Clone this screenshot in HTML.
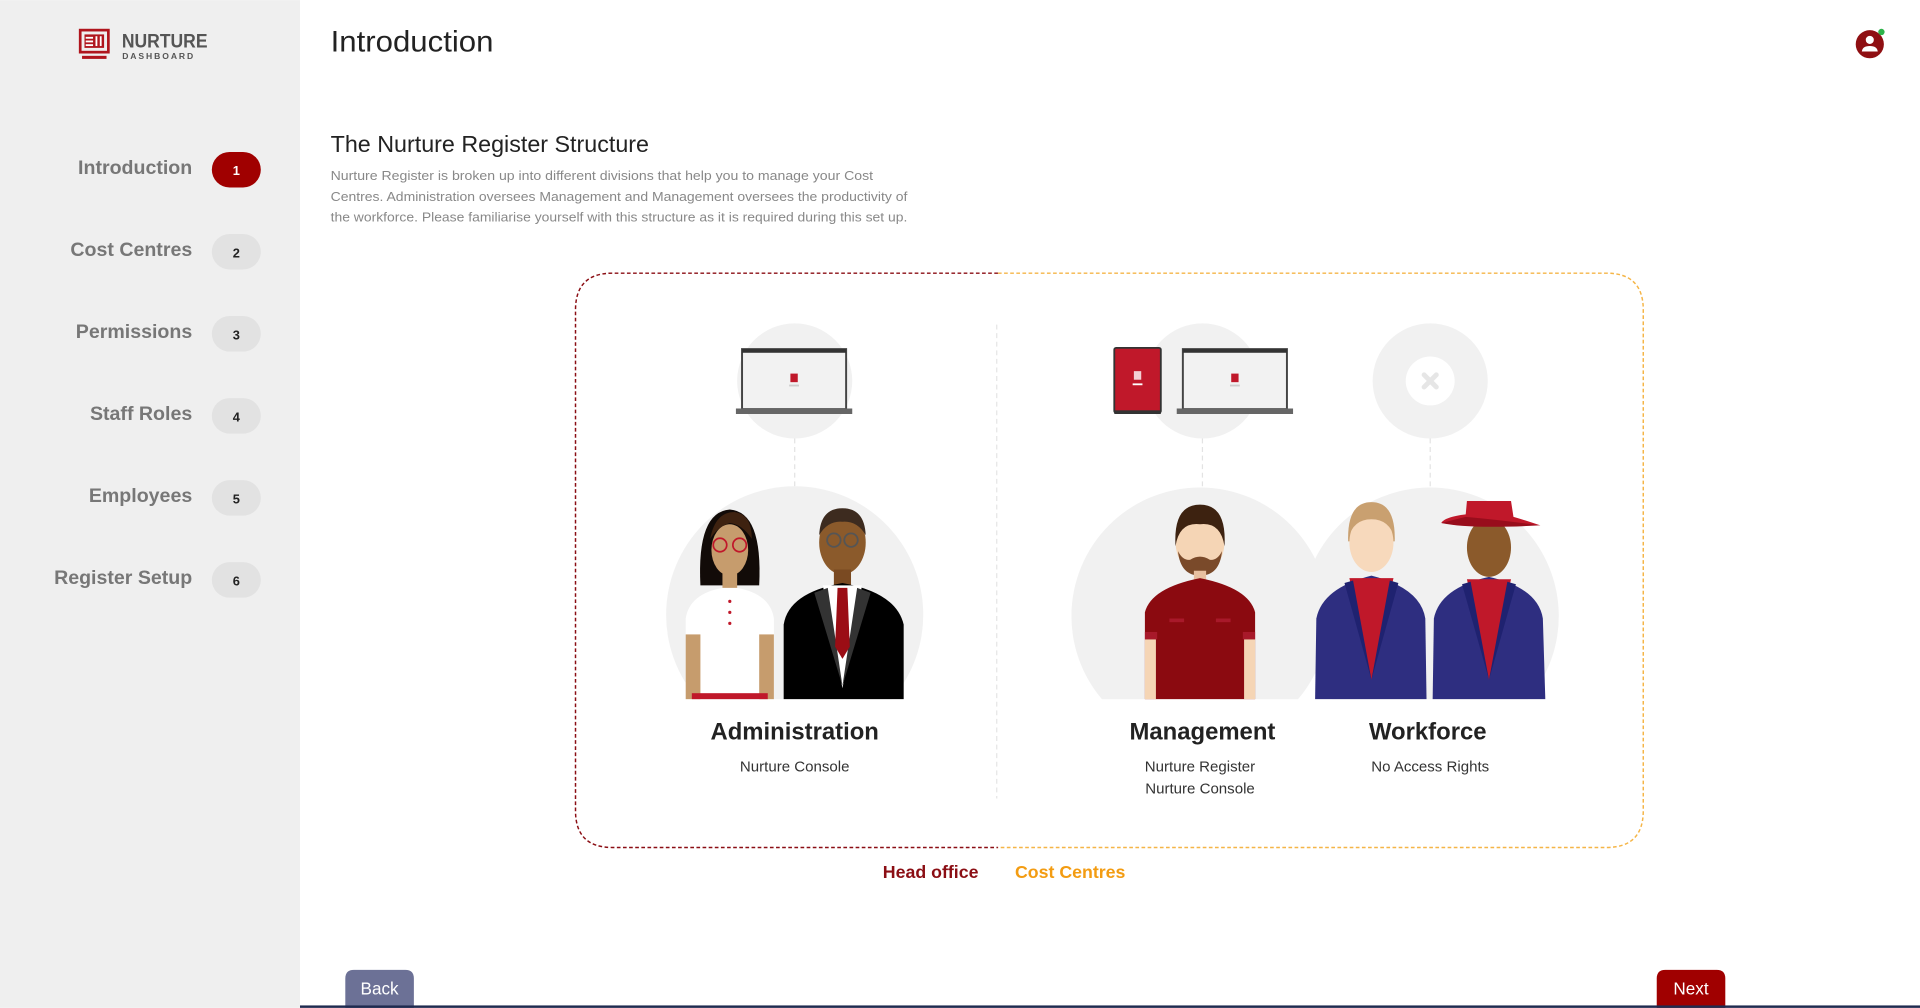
<!DOCTYPE html>
<html><head><meta charset="utf-8"><style>
html,body{margin:0;padding:0;width:1920px;height:1008px;overflow:hidden;background:#fff;font-family:"Liberation Sans",sans-serif}
svg{position:absolute;left:0;top:0}
</style></head><body>
<svg width="1920" height="1008" viewBox="0 0 1568 823" xmlns="http://www.w3.org/2000/svg" font-family="Liberation Sans, sans-serif">
<defs><clipPath id="cl"><rect x="0" y="0" width="1568" height="571"/></clipPath></defs>
<rect x="0" y="0" width="245" height="823" fill="#efefef"/>
<!-- logo -->
<rect x="65.5" y="24.5" width="23" height="18" fill="none" stroke="#b0151d" stroke-width="2.2"/>
<rect x="69" y="28" width="16" height="11" fill="#b0151d"/>
<g fill="#fff"><rect x="70" y="30" width="6" height="1.5"/><rect x="70" y="33" width="6" height="1.5"/><rect x="70" y="36" width="6" height="1.5"/><rect x="78" y="29.5" width="1.5" height="8"/><rect x="81.5" y="29.5" width="1.5" height="8"/></g>
<rect x="67" y="45.5" width="20" height="2.5" fill="#b0151d"/>
<text x="99.5" y="38.5" font-size="15.5" font-weight="bold" fill="#555" textLength="70" lengthAdjust="spacingAndGlyphs">NURTURE</text>
<text x="99.8" y="48.2" font-size="7" font-weight="bold" fill="#555" textLength="58" lengthAdjust="spacing">DASHBOARD</text>
<!-- nav -->
<g font-size="16" font-weight="bold" fill="#777" text-anchor="end">
<text x="157" y="142">Introduction</text>
<text x="157" y="209">Cost Centres</text>
<text x="157" y="276">Permissions</text>
<text x="157" y="343">Staff Roles</text>
<text x="157" y="410">Employees</text>
<text x="157" y="477">Register Setup</text>
</g>
<rect x="173" y="124" width="40" height="29" rx="14.5" fill="#a00000"/>
<g fill="#e2e2e2"><rect x="173" y="191" width="40" height="29" rx="14.5"/><rect x="173" y="258" width="40" height="29" rx="14.5"/><rect x="173" y="325" width="40" height="29" rx="14.5"/><rect x="173" y="392" width="40" height="29" rx="14.5"/><rect x="173" y="459" width="40" height="29" rx="14.5"/></g>
<g font-size="10.5" font-weight="bold" text-anchor="middle" fill="#222">
<text x="193" y="143" fill="#fff">1</text><text x="193" y="210">2</text><text x="193" y="277">3</text><text x="193" y="344">4</text><text x="193" y="411">5</text><text x="193" y="478">6</text>
</g>
<!-- header -->
<text x="270" y="42" font-size="24" fill="#222" textLength="133" lengthAdjust="spacingAndGlyphs">Introduction</text>
<circle cx="1527" cy="36" r="11.5" fill="#8f0f12"/>
<circle cx="1527" cy="32.5" r="3.3" fill="#fff"/><path d="M1520.5,42 Q1521,37.5 1527,37.5 Q1533,37.5 1533.5,42 Z" fill="#fff"/>
<circle cx="1536.5" cy="26" r="2.6" fill="#2db34a"/>
<text x="270" y="124" font-size="18.5" fill="#222" textLength="260" lengthAdjust="spacingAndGlyphs">The Nurture Register Structure</text>
<g font-size="10.8" fill="#888">
<text x="270" y="147" textLength="443" lengthAdjust="spacingAndGlyphs">Nurture Register is broken up into different divisions that help you to manage your Cost</text>
<text x="270" y="164" textLength="471" lengthAdjust="spacingAndGlyphs">Centres. Administration oversees Management and Management oversees the productivity of</text>
<text x="270" y="181" textLength="471" lengthAdjust="spacingAndGlyphs">the workforce. Please familiarise yourself with this structure as it is required during this set up.</text>
</g>
<!-- dashed box -->
<path d="M815,223 L500,223 Q470,223 470,253 L470,662 Q470,692 500,692 L815,692" fill="none" stroke="#8b0e14" stroke-width="1.2" stroke-dasharray="3,2"/>
<path d="M815,223 L1312,223 Q1342,223 1342,253 L1342,662 Q1342,692 1312,692 L815,692" fill="none" stroke="#f5b547" stroke-width="1.2" stroke-dasharray="3,2"/>
<line x1="814" y1="265" x2="814" y2="652" stroke="#e5e5e5" stroke-dasharray="4,3"/>
<!-- device circles -->
<circle cx="649" cy="311" r="47" fill="#f1f1f1"/>
<circle cx="982" cy="311" r="47" fill="#f1f1f1"/>
<circle cx="1168" cy="311" r="47" fill="#f1f1f1"/>
<circle cx="1168" cy="311" r="20" fill="#fff"/>
<path d="M1163,306 L1173,316 M1173,306 L1163,316" stroke="#e6e6e6" stroke-width="4" stroke-linecap="round"/>
<g stroke="#e3e3e3" stroke-dasharray="4,3"><line x1="649" y1="358" x2="649" y2="398"/><line x1="982" y1="358" x2="982" y2="398"/><line x1="1168" y1="358" x2="1168" y2="398"/></g>
<!-- laptops -->
<g id="lap">
<rect x="606" y="285" width="85" height="49" fill="#f2f2f2" stroke="#444" stroke-width="1.6"/>
<rect x="606" y="285" width="85" height="3" fill="#333"/>
<rect x="601" y="333.5" width="95" height="4.5" fill="#666"/>
<rect x="645.5" y="305" width="6" height="7" fill="#c0182a"/><rect x="644.5" y="314" width="8" height="1.5" fill="#ccc"/>
</g>
<use href="#lap" transform="translate(360,0)"/>
<rect x="910" y="284" width="38" height="53" rx="1.5" fill="#c0182a" stroke="#333" stroke-width="1.5"/>
<rect x="910" y="335" width="38" height="3" fill="#333"/>
<rect x="926" y="303" width="6" height="7" fill="#fff" opacity=".8"/><rect x="925" y="313" width="8" height="1.5" fill="#fff"/>
<!-- people circles -->
<g clip-path="url(#cl)" fill="#f1f1f1">
<circle cx="649" cy="502" r="105"/><circle cx="980" cy="503" r="105"/><circle cx="1168" cy="503" r="105"/>
</g>
<g clip-path="url(#cl)">
<!-- woman -->
<path d="M572,478 Q569,418 596,416 Q623,418 620,478 Z" fill="#120b08"/>
<ellipse cx="596" cy="449" rx="15" ry="21" fill="#c69c6d"/>
<path d="M580,440 Q584,418 600,418 Q614,420 614,440 Q606,428 596,427 Q586,430 580,440Z" fill="#3e2210"/>
<rect x="590" y="466" width="12" height="18" fill="#c69c6d"/>
<path d="M560,571 L560,505 Q563,485 590,480 L602,480 Q629,485 632,505 L632,571 Z" fill="#fff"/>
<rect x="560" y="518" width="12" height="53" fill="#c69c6d"/><rect x="620" y="518" width="12" height="53" fill="#c69c6d"/>
<g fill="none" stroke="#c0182a" stroke-width="1.4"><circle cx="588" cy="445" r="5.5"/><circle cx="604" cy="445" r="5.5"/></g>
<g fill="#c0182a"><circle cx="596" cy="491" r="1.3"/><circle cx="596" cy="500" r="1.3"/><circle cx="596" cy="509" r="1.3"/></g>
<rect x="565" y="566" width="62" height="5" fill="#c0182a"/>
<!-- suit man -->
<ellipse cx="688" cy="443" rx="19" ry="26" fill="#8b5a2b"/>
<path d="M669,437 Q670,415 688,415 Q706,415 707,437 Q700,425 688,426 Q676,425 669,437Z" fill="#3d2b1f"/>
<rect x="681" y="465" width="14" height="14" fill="#7a4a22"/>
<g fill="none" stroke="#555" stroke-width="1.5"><circle cx="681" cy="441" r="5.5"/><circle cx="695" cy="441" r="5.5"/></g>
<path d="M640,571 L640,510 Q644,484 688,476 Q732,484 738,510 L738,571Z" fill="#000"/>
<path d="M672,478 L704,478 L688,562Z" fill="#fff"/>
<path d="M665,484 L688,560 L676,480Z M711,484 L688,560 L700,480Z" fill="#333"/>
<path d="M684,480 L692,480 L694,528 L688,538 L682,528Z" fill="#9b0d15"/>
<!-- management -->
<ellipse cx="980" cy="442" rx="20" ry="27" fill="#f5d5b5"/>
<path d="M960,446 Q958,412 980,412 Q1002,412 1000,446 Q997,426 980,428 Q963,426 960,446Z" fill="#3d2210"/>
<path d="M962,450 Q964,470 980,470 Q996,470 998,450 Q994,458 988,457 Q980,452 972,457 Q966,458 962,450Z" fill="#7a4a2a"/>
<rect x="975" y="466" width="10" height="10" fill="#e8c0a0"/>
<path d="M935,571 L935,500 Q940,480 980,472 Q1020,480 1025,500 L1025,571Z" fill="#8b0a10"/>
<rect x="935" y="522" width="9" height="49" fill="#f5d5b5"/><rect x="1016" y="522" width="9" height="49" fill="#f5d5b5"/>
<rect x="935" y="516" width="10" height="6" fill="#a8192a"/><rect x="1015" y="516" width="10" height="6" fill="#a8192a"/>
<rect x="955" y="505" width="12" height="3" fill="#a8192a"/><rect x="993" y="505" width="12" height="3" fill="#a8192a"/>
<!-- workforce 1 -->
<path d="M1101,442 Q1100,410 1120,410 Q1140,410 1139,442Z" fill="#c9a070"/>
<ellipse cx="1120" cy="443" rx="18" ry="24" fill="#f7d9bc"/>
<path d="M1101,440 Q1104,418 1120,418 Q1136,418 1139,440 Q1135,424 1120,424 Q1105,424 1101,440Z" fill="#c9a070"/>
<path d="M1074,571 L1075,505 Q1080,480 1120,470 Q1160,480 1164,505 L1165,571Z" fill="#2e2e80"/>
<path d="M1102,472 L1138,472 L1120,555Z" fill="#c0182a"/>
<path d="M1098,476 L1120,555 L1105,474Z M1142,476 L1120,555 L1135,474Z" fill="#1f2270"/>
<!-- workforce 2 -->
<ellipse cx="1216" cy="447" rx="18" ry="24" fill="#8b5a2b"/>
<path d="M1197,429 L1258,429 Q1240,423 1236,422 L1234,409 L1198,409 L1197,420 Q1180,422 1177,427 Z" fill="#c0182a"/>
<path d="M1177,427 Q1200,432 1257,429 Q1230,425 1197,422Z" fill="#980d1c"/>
<path d="M1170,571 L1171,505 Q1176,480 1216,471 Q1256,480 1260,505 L1262,571Z" fill="#2e2e80"/>
<path d="M1198,473 L1234,473 L1216,555Z" fill="#c0182a"/>
<path d="M1194,477 L1216,555 L1201,475Z M1238,477 L1216,555 L1231,475Z" fill="#1f2270"/>
</g>
<!-- labels -->
<g text-anchor="middle" fill="#222">
<text x="649" y="604" font-size="19.5" font-weight="bold">Administration</text>
<text x="982" y="604" font-size="19.5" font-weight="bold">Management</text>
<text x="1166" y="604" font-size="19.5" font-weight="bold">Workforce</text>
<g font-size="12.3" fill="#333">
<text x="649" y="630">Nurture Console</text>
<text x="980" y="630">Nurture Register</text>
<text x="980" y="648">Nurture Console</text>
<text x="1168" y="630">No Access Rights</text>
</g>
</g>
<text x="760" y="717" font-size="14.5" font-weight="bold" fill="#8b0e14" text-anchor="middle">Head office</text>
<text x="874" y="717" font-size="14.5" font-weight="bold" fill="#f39c12" text-anchor="middle">Cost Centres</text>
<!-- buttons -->
<path d="M282,823 L282,799 Q282,792 289,792 L331,792 Q338,792 338,799 L338,823Z" fill="#6c7196"/>
<text x="310" y="812" font-size="14" fill="#fff" text-anchor="middle">Back</text>
<path d="M1353,823 L1353,799 Q1353,792 1360,792 L1402,792 Q1409,792 1409,799 L1409,823Z" fill="#a00000"/>
<text x="1381" y="812" font-size="14" fill="#fff" text-anchor="middle">Next</text>
<rect x="245" y="821" width="1323" height="2" fill="#1f2a4f"/>
</svg>
</body></html>
